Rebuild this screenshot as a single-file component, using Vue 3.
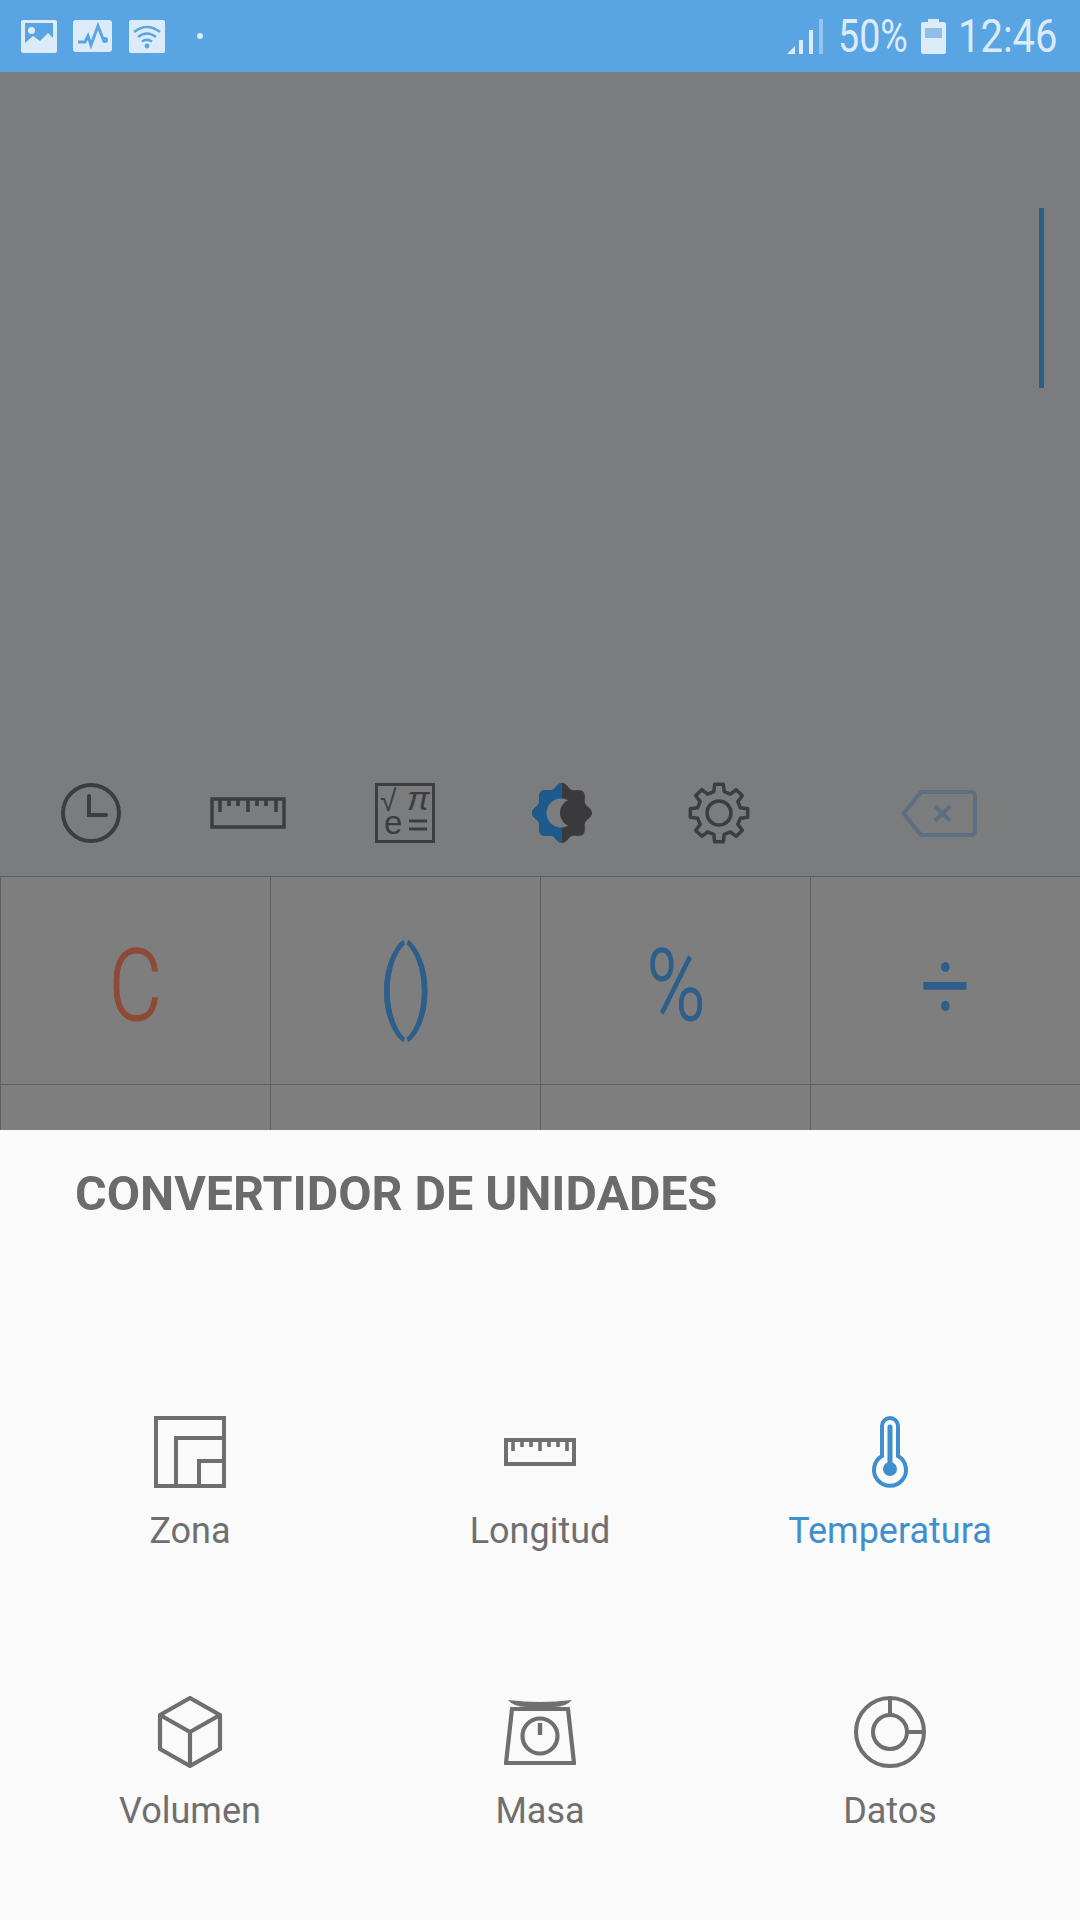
<template>
  <div class="phone">
    <header class="status">
      <div class="status-left">
        <svg class="note" width="36" height="33" viewBox="0 0 36 33">
          <rect width="36" height="33" rx="2" fill="#dcebf9" />
          <rect x="4" y="3" width="28" height="25" fill="#59a5e4" />
          <circle cx="10.5" cy="10.5" r="3.5" fill="#dcebf9" />
          <path d="M4 23 L12 16 L19 21 L27 13 L32 18 V28 H4 Z" fill="#dcebf9" />
        </svg>
        <svg class="note" width="39" height="32" viewBox="0 0 39 32">
          <rect width="39" height="32" rx="3" fill="#dcebf9" />
          <path d="M5 22 H12 L15 16 L18 25 L25 6 L30 19" fill="none" stroke="#59a5e4" stroke-width="3" />
          <circle cx="32" cy="20" r="3" fill="#59a5e4" />
        </svg>
        <svg class="note" width="36" height="33" viewBox="0 0 36 33">
          <rect width="36" height="33" rx="2" fill="#dcebf9" />
          <g fill="none" stroke="#59a5e4" stroke-width="2.4">
            <path d="M5 12 Q18 2 31 12" />
            <path d="M9 17 Q18 10 27 17" />
            <path d="M13 21.5 Q18 18 23 21.5" />
          </g>
          <circle cx="18" cy="26" r="2.4" fill="#59a5e4" />
        </svg>
        <span class="dot"></span>
      </div>
      <div class="status-right">
        <svg width="36" height="35" viewBox="0 0 36 35">
          <path d="M0 35 L8 27 V35 Z" fill="#dcebf9" />
          <rect x="12" y="21" width="4" height="14" fill="#dcebf9" />
          <rect x="22" y="11" width="4" height="24" fill="#dcebf9" />
          <rect x="32" y="0" width="4" height="35" fill="#dcebf9" opacity=".45" />
        </svg>
        <span class="pct">50%</span>
        <svg class="batt" width="25" height="35" viewBox="0 0 25 35">
          <path d="M7 0 H18 V3 H23 Q25 3 25 5 V33 Q25 35 23 35 H2 Q0 35 0 33 V5 Q0 3 2 3 H7 Z" fill="#dcebf9" />
          <rect x="4" y="9" width="17" height="10" fill="#8fbfe9" />
        </svg>
        <span class="clock">12:46</span>
      </div>
    </header>

    <div class="display">
      <span class="cursor"></span>
    </div>

    <div class="toolbar">
      <div class="tool">
        <svg width="62" height="62" viewBox="0 0 62 62" fill="none" stroke="#3c3d3f" stroke-width="4">
          <circle cx="31" cy="31" r="28" />
          <path d="M29 14 V33 H46" stroke-linecap="round" />
        </svg>
      </div>
      <div class="tool">
        <svg width="76" height="32" viewBox="0 0 76 32" fill="none" stroke="#3c3d3f">
          <rect x="2" y="2" width="72" height="28" stroke-width="3.5" />
          <path d="M10 2 V15 M19 2 V9 M28 2 V9 M38 2 V15 M47 2 V9 M56 2 V9 M66 2 V15" stroke-width="3.6" />
        </svg>
      </div>
      <div class="tool">
        <svg class="formula" width="60" height="60" viewBox="0 0 60 60">
          <rect x="1.5" y="1.5" width="57" height="57" fill="none" stroke="#3c3d3f" stroke-width="3" />
          <text x="5" y="28" class="math root">√</text>
          <text x="32" y="27" class="math pi">π</text>
          <text x="9" y="51" class="math">e</text>
          <path d="M34 38 H52 M34 46 H52" stroke="#3c3d3f" stroke-width="3" />
        </svg>
      </div>
      <div class="tool">
        <svg width="64" height="64" viewBox="-32 -32 64 64">
          <path :d="scallop" fill="#3a3a3c" />
          <path :d="scallop" fill="#1d5a8e" clip-path="url(#left-half)" />
          <clipPath id="left-half"><rect x="-32" y="-32" width="32" height="64" /></clipPath>
          <circle r="14.5" cx="-1" fill="#7b7c7e" />
          <circle r="14" cx="12" fill="#3a3a3c" />
        </svg>
      </div>
      <div class="tool">
        <svg width="64" height="64" viewBox="-32 -32 64 64" fill="none" stroke="#3c3d3f" stroke-width="3.5">
          <path :d="gear" stroke-linejoin="round" />
          <circle r="12" />
        </svg>
      </div>
      <div class="tool back">
        <svg width="76" height="47" viewBox="0 0 76 47" fill="none" stroke="#5c6e80" stroke-width="4">
          <path d="M20 2 H70 Q74 2 74 6 V41 Q74 45 70 45 H20 L2.5 23.5 Z" stroke-linejoin="round" />
          <path d="M34 16 L49 31 M49 16 L34 31" stroke-width="4" />
        </svg>
      </div>
    </div>

    <div class="keys">
      <div v-for="key in keys" :key="key.id" class="key" :class="key.cls">
        <span>{{ key.label }}</span>
      </div>
    </div>

    <section class="sheet">
      <h2 class="title">CONVERTIDOR DE UNIDADES</h2>
      <div class="units">
        <div class="unit">
          <svg width="72" height="72" viewBox="0 0 72 72" fill="none" stroke="currentColor" stroke-width="4">
            <rect x="2" y="2" width="68" height="68" />
            <path d="M22 70 V22 H70 M45 70 V45 H70" />
          </svg>
          <span>Zona</span>
        </div>
        <div class="unit">
          <svg width="72" height="72" viewBox="0 0 72 72" fill="none" stroke="currentColor">
            <rect x="2" y="24" width="68" height="24" stroke-width="4" />
            <path d="M9 24 V35 M18 24 V31 M27 24 V31 M36 24 V35 M45 24 V31 M54 24 V31 M63 24 V35" stroke-width="3.6" />
          </svg>
          <span>Longitud</span>
        </div>
        <div class="unit active">
          <svg width="72" height="72" viewBox="0 0 72 72" fill="none" stroke="currentColor" stroke-width="4">
            <path d="M28 10 a8 8 0 0 1 16 0 V40 A16 16 0 1 1 28 40 Z" />
            <path d="M36 11 V50" stroke-width="5" stroke-linecap="round" />
            <circle cx="36" cy="53" r="7" fill="currentColor" stroke="none" />
          </svg>
          <span>Temperatura</span>
        </div>
        <div class="unit">
          <svg width="72" height="72" viewBox="0 0 72 72" fill="none" stroke="currentColor" stroke-width="4.2" stroke-linejoin="round">
            <path d="M36 2 L66 19 V53 L36 70 L6 53 V19 Z" />
            <path d="M6 19 L36 36 L66 19 M36 36 V70" />
          </svg>
          <span>Volumen</span>
        </div>
        <div class="unit">
          <svg width="72" height="72" viewBox="0 0 72 72" fill="none" stroke="currentColor" stroke-width="4.2">
            <path d="M4 4 Q36 8 68 4 Q62 11 50 11 H22 Q10 11 4 4 Z" fill="currentColor" stroke="none" />
            <path d="M8 13 H64 L70 67 H2 Z" />
            <circle cx="36" cy="40" r="17.5" />
            <path d="M36 27 V39" stroke-width="4.4" />
          </svg>
          <span>Masa</span>
        </div>
        <div class="unit">
          <svg width="72" height="72" viewBox="0 0 72 72" fill="none" stroke="currentColor" stroke-width="4">
            <circle cx="36" cy="36" r="34" />
            <circle cx="36" cy="36" r="17" />
            <path d="M36 2 V19 M53 36 H70" />
          </svg>
          <span>Datos</span>
        </div>
      </div>
    </section>
  </div>
</template>

<script setup>
const keys = [
  { id: 1, label: 'C', cls: 'red' },
  { id: 2, label: '()', cls: 'paren' },
  { id: 3, label: '%', cls: 'blue' },
  { id: 4, label: '÷', cls: 'blue div' },
  { id: 5, label: '' },
  { id: 6, label: '' },
  { id: 7, label: '' },
  { id: 8, label: '' }
]

// wavy outline for the theme icon, r = base + amp * cos(8a)
function wavy(base, amp) {
  const pts = []
  for (let i = 0; i < 240; i++) {
    const a = (i / 240) * Math.PI * 2
    const r = base + amp * Math.cos(8 * a)
    pts.push((r * Math.sin(a)).toFixed(2) + ' ' + (-r * Math.cos(a)).toFixed(2))
  }
  return 'M' + pts.join(' L') + ' Z'
}

// gear with 8 flat teeth
function gearPath(outer, inner) {
  const pts = []
  const step = Math.PI / 4
  for (let i = 0; i < 8; i++) {
    const a = i * step
    const at = (r, d) => (r * Math.sin(a + d)).toFixed(2) + ' ' + (-r * Math.cos(a + d)).toFixed(2)
    pts.push(at(inner, -0.24), at(outer, -0.15), at(outer, 0.15), at(inner, 0.24))
  }
  return 'M' + pts.join(' L') + ' Z'
}

const scallop = wavy(27.5, 2.5)
const gear = gearPath(29, 22)
</script>

<style scoped>
.phone {
  width: 1080px;
  height: 1920px;
  display: flex;
  flex-direction: column;
  overflow: hidden;
  background: #7b7c7e;
  font-family: Roboto, "Liberation Sans", sans-serif;
}

.status {
  height: 72px;
  flex: none;
  background: #59a5e4;
  display: flex;
  align-items: center;
  justify-content: space-between;
  padding: 0 25px 0 21px;
  color: #dcebf9;
}

.status-left {
  display: flex;
  align-items: center;
  gap: 16px;
}

.note {
  display: block;
}

.note + .note + .note {
  margin-left: 1px;
}

.dot {
  width: 6px;
  height: 6px;
  border-radius: 50%;
  background: #dcebf9;
  margin-left: 16px;
}

.status-right {
  display: flex;
  align-items: center;
}

.pct,
.clock {
  display: inline-block;
  font-size: 47px;
  line-height: 74px;
  white-space: nowrap;
  transform-origin: left center;
}

.pct {
  width: 72px;
  margin-left: 15px;
  transform: scaleX(0.8);
}

.batt {
  margin-left: 11px;
}

.clock {
  width: 97px;
  margin-left: 12px;
  transform: scaleX(0.85);
}

.display {
  height: 678px;
  flex: none;
  display: flex;
  justify-content: flex-end;
  padding: 136px 36px 0 0;
  box-sizing: border-box;
}

.cursor {
  width: 5px;
  height: 180px;
  background: #2c5e8a;
}

.toolbar {
  height: 126px;
  flex: none;
  display: flex;
  padding-left: 12px;
  box-sizing: border-box;
}

.tool {
  width: 157px;
  display: flex;
  align-items: center;
  justify-content: center;
}

.tool.back {
  width: 76px;
  margin-left: 104px;
}

.formula {
  overflow: visible;
}

.math {
  font-family: "Liberation Sans", sans-serif;
  font-size: 33px;
  fill: #3c3d3f;
}

.root {
  font-size: 30px;
}

.pi {
  font-style: italic;
  font-size: 34px;
}

.keys {
  height: 254px;
  flex: none;
  display: grid;
  grid-template-columns: repeat(4, 270px);
  grid-template-rows: 208px 46px;
  background: #7e7e7e;
}

.key {
  border-left: 1px solid #5f5f5f;
  border-top: 1px solid #5f5f5f;
  display: flex;
  align-items: center;
  justify-content: center;
  overflow: hidden;
  padding-top: 9px;
  box-sizing: border-box;
  font-size: 100px;
  font-weight: 300;
  -webkit-text-stroke: 1px currentColor;
}

.key span {
  display: block;
}

.red {
  color: #8c4b35;
}

.red span {
  transform: scaleX(0.82);
}

.blue {
  color: #2c5f8a;
}

.blue span {
  transform: scaleX(0.8);
}

.paren {
  color: #2c5f8a;
  font-size: 99px;
}

.paren span {
  transform: scaleX(0.86);
}

.blue.div {
  -webkit-text-stroke: 2px currentColor;
}

.div span {
  transform: scaleX(0.85);
}

.sheet {
  flex: 1;
  background: #fafafa;
  padding-top: 36px;
}

.title {
  margin: 0 0 194px 75px;
  font-size: 48.4px;
  line-height: 56px;
  font-weight: 700;
  color: #6b6b6b;
}

.units {
  display: grid;
  grid-template-columns: repeat(3, 350px);
  grid-auto-rows: 280px;
  padding-left: 15px;
  color: #6f6f6f;
}

.unit {
  display: flex;
  flex-direction: column;
  align-items: center;
  font-size: 36px;
  line-height: 40px;
  color: #6f6f6f;
}

.unit svg {
  margin-bottom: 23px;
}

.unit.active {
  color: #3f8fcf;
}
</style>

<style>
body {
  background: #fafafa;
}
</style>
